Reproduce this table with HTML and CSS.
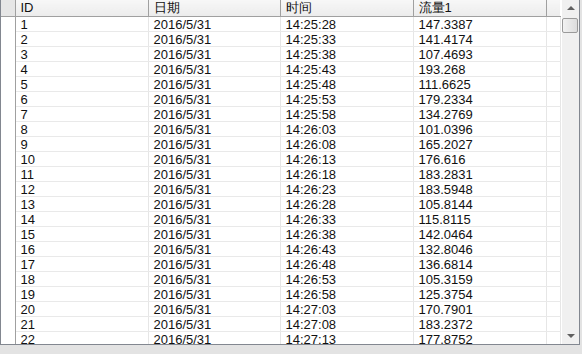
FILE: index.html
```html
<!DOCTYPE html>
<html>
<head>
<meta charset="utf-8">
<link rel="stylesheet" href="styles.css">
</head>
<body>
<div class="window">
  <div class="grid">
    <div class="table-area">
      <table class="data">
        <colgroup>
          <col class="c-rh"><col class="c-id"><col class="c-date"><col class="c-time"><col class="c-flow"><col class="c-extra">
        </colgroup>
        <thead>
          <tr><th class="rh"></th><th>ID</th><th>日期</th><th>时间</th><th>流量1</th><th class="extra"></th></tr>
        </thead>
        <tbody>
          <tr><td class="rh"></td><td>1</td><td>2016/5/31</td><td>14:25:28</td><td>147.3387</td><td></td></tr>
          <tr><td class="rh"></td><td>2</td><td>2016/5/31</td><td>14:25:33</td><td>141.4174</td><td></td></tr>
          <tr><td class="rh"></td><td>3</td><td>2016/5/31</td><td>14:25:38</td><td>107.4693</td><td></td></tr>
          <tr><td class="rh"></td><td>4</td><td>2016/5/31</td><td>14:25:43</td><td>193.268</td><td></td></tr>
          <tr><td class="rh"></td><td>5</td><td>2016/5/31</td><td>14:25:48</td><td>111.6625</td><td></td></tr>
          <tr><td class="rh"></td><td>6</td><td>2016/5/31</td><td>14:25:53</td><td>179.2334</td><td></td></tr>
          <tr><td class="rh"></td><td>7</td><td>2016/5/31</td><td>14:25:58</td><td>134.2769</td><td></td></tr>
          <tr><td class="rh"></td><td>8</td><td>2016/5/31</td><td>14:26:03</td><td>101.0396</td><td></td></tr>
          <tr><td class="rh"></td><td>9</td><td>2016/5/31</td><td>14:26:08</td><td>165.2027</td><td></td></tr>
          <tr><td class="rh"></td><td>10</td><td>2016/5/31</td><td>14:26:13</td><td>176.616</td><td></td></tr>
          <tr><td class="rh"></td><td>11</td><td>2016/5/31</td><td>14:26:18</td><td>183.2831</td><td></td></tr>
          <tr><td class="rh"></td><td>12</td><td>2016/5/31</td><td>14:26:23</td><td>183.5948</td><td></td></tr>
          <tr><td class="rh"></td><td>13</td><td>2016/5/31</td><td>14:26:28</td><td>105.8144</td><td></td></tr>
          <tr><td class="rh"></td><td>14</td><td>2016/5/31</td><td>14:26:33</td><td>115.8115</td><td></td></tr>
          <tr><td class="rh"></td><td>15</td><td>2016/5/31</td><td>14:26:38</td><td>142.0464</td><td></td></tr>
          <tr><td class="rh"></td><td>16</td><td>2016/5/31</td><td>14:26:43</td><td>132.8046</td><td></td></tr>
          <tr><td class="rh"></td><td>17</td><td>2016/5/31</td><td>14:26:48</td><td>136.6814</td><td></td></tr>
          <tr><td class="rh"></td><td>18</td><td>2016/5/31</td><td>14:26:53</td><td>105.3159</td><td></td></tr>
          <tr><td class="rh"></td><td>19</td><td>2016/5/31</td><td>14:26:58</td><td>125.3754</td><td></td></tr>
          <tr><td class="rh"></td><td>20</td><td>2016/5/31</td><td>14:27:03</td><td>170.7901</td><td></td></tr>
          <tr><td class="rh"></td><td>21</td><td>2016/5/31</td><td>14:27:08</td><td>183.2372</td><td></td></tr>
          <tr><td class="rh"></td><td>22</td><td>2016/5/31</td><td>14:27:13</td><td>177.8752</td><td></td></tr>
        </tbody>
      </table>
    </div>
    <div class="vscroll">
      <div class="arrow up"></div>
      <div class="thumb"></div>
      <div class="track"></div>
      <div class="arrow down"></div>
    </div>
  </div>
</div>
</body>
</html>
```

FILE: styles.css
```css
html, body {
  margin: 0;
  padding: 0;
  background: #e3e3e3;
}
.window {
  width: 582px;
  height: 354px;
  background: #e3e3e3;
}
.grid {
  box-sizing: border-box;
  width: 580px;
  height: 345px;
  border: 1px solid #828790;
  border-top: none;
  background: #fff;
  display: flex;
}
.table-area {
  flex: 1;
  overflow: hidden;
}
.data {
  border-collapse: collapse;
  table-layout: fixed;
  width: 559px;
  font-family: "Liberation Sans", Arial, sans-serif;
  font-size: 13px;
  color: #111;
}
.c-rh { width: 14px; }
.c-id { width: 133px; }
.c-date { width: 132px; }
.c-time { width: 133px; }
.c-flow { width: 133px; }
.c-extra { width: 14px; }
th {
  height: 16px;
  padding: 0 0 0 5px;
  text-align: left;
  font-weight: normal;
  background: linear-gradient(#f7f7f7, #ececec);
  border-right: 1px solid #a0a0a0;
  border-bottom: 1px solid #a0a0a0;
  border-left: 1px solid #fff;
  line-height: 16px;
  white-space: nowrap;
  overflow: hidden;
}
th.rh {
  background: #e6e6e6;
  border-left: none;
  padding: 0;
}
th.extra {
  border-right: none;
}
td {
  height: 12px;
  padding: 2px 0 0 5px;
  line-height: 12px;
  border-right: 1px solid #e6e6e6;
  border-bottom: 1px solid #e9e9e9;
  white-space: nowrap;
  overflow: hidden;
}
td.rh {
  padding: 0;
  border-right: 1px solid #a0a0a0;
  border-bottom: none;
}
.vscroll {
  width: 17px;
  background: #f0f0f0;
  display: flex;
  flex-direction: column;
  border-left: 1px solid #fff;
}
.arrow {
  height: 17px;
  position: relative;
}
.arrow::after {
  content: "";
  position: absolute;
  left: 5px;
  width: 0;
  height: 0;
  border-left: 4px solid transparent;
  border-right: 4px solid transparent;
}
.arrow.up::after {
  top: 6px;
  border-bottom: 4px solid #606060;
}
.arrow.down::after {
  top: 7px;
  border-top: 4px solid #606060;
}
.thumb {
  box-sizing: border-box;
  height: 15px;
  margin: 1px 1px 0 0;
  border: 1px solid #9a9a9a;
  border-radius: 2px;
  background: linear-gradient(90deg, #f2f2f2, #dcdcdc);
}
.track {
  flex: 1;
}
```
